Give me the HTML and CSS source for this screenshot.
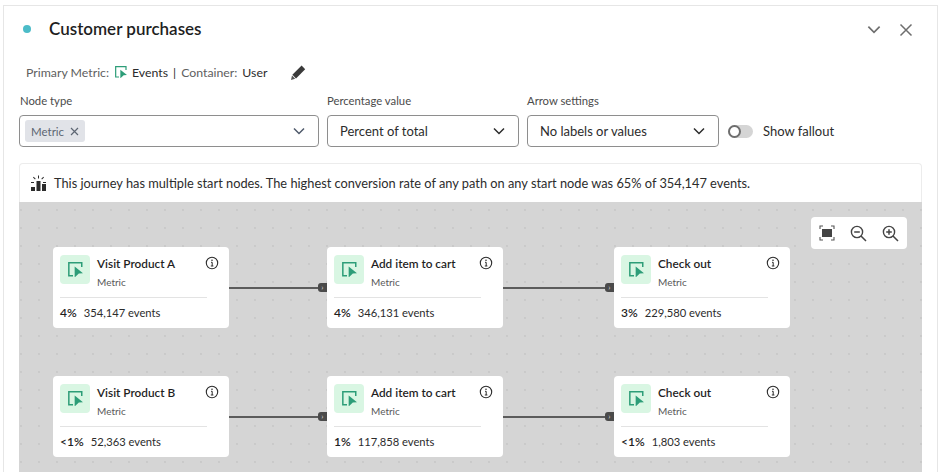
FILE: index.html
```html
<!DOCTYPE html>
<html lang="en">
<head>
  <meta charset="UTF-8" />
  <title>Customer purchases</title>
  <link rel="stylesheet" href="styles.css">
</head>
<body>
  <svg class="defs" width="0" height="0">
    <symbol id="metric" viewBox="0 0 18 18">
      <path d="M6 16.5H1V1H16.5V6" fill="none" stroke="currentColor" stroke-width="1.8"/>
      <path d="M8 5.5L18 13.5L13 13.8L8 18.5Z" fill="currentColor"/>
    </symbol>
    <symbol id="info" viewBox="0 0 14 14">
      <circle cx="7" cy="7" r="5.7" fill="none" stroke="currentColor" stroke-width="1.1"/>
      <circle cx="7" cy="4.2" r="0.8" fill="currentColor"/>
      <path d="M6 6.3H7.2V10M5.8 10H8.4" fill="none" stroke="currentColor" stroke-width="1"/>
    </symbol>
    <symbol id="chev" viewBox="0 0 12 8">
      <path d="M1 1.5L6 6.5L11 1.5" fill="none" stroke="currentColor" stroke-width="1.5"/>
    </symbol>
  </svg>

  <main class="panel">
    <header class="title-row">
      <span class="dot"></span>
      <h2>Customer purchases</h2>
      <svg class="head-chev" width="14" height="9"><use href="#chev"/></svg>
      <svg class="head-close" width="14" height="14" viewBox="0 0 14 14"><path d="M1.5 1.5L12.5 12.5M12.5 1.5L1.5 12.5" stroke="currentColor" stroke-width="1.5"/></svg>
    </header>

    <div class="meta-row">
      <span class="muted">Primary Metric:</span>
      <svg class="meta-icon" width="12" height="12"><use href="#metric"/></svg>
      <span>Events</span>
      <span class="sep">|</span>
      <span class="muted">Container:</span>
      <span>User</span>
      <svg class="pencil" width="17" height="17" viewBox="0 0 17 17"><path d="M11.6 1.6L15.2 5.2L6 14.4L2.4 10.8Z" fill="#3a3a3a"/><path d="M2 11.6L5.2 14.8L1 16Z" fill="#555"/></svg>
    </div>

    <section class="controls">
      <div class="field field-wide">
        <label>Node type</label>
        <div class="select">
          <span class="tag">Metric <svg width="9" height="9" viewBox="0 0 9 9"><path d="M1 1L8 8M8 1L1 8" stroke="currentColor" stroke-width="1.2"/></svg></span>
          <svg class="select-chev light" width="12" height="8"><use href="#chev"/></svg>
        </div>
      </div>
      <div class="field">
        <label>Percentage value</label>
        <div class="select"><span class="value">Percent of total</span><svg class="select-chev" width="12" height="8"><use href="#chev"/></svg></div>
      </div>
      <div class="field">
        <label>Arrow settings</label>
        <div class="select"><span class="value">No labels or values</span><svg class="select-chev" width="12" height="8"><use href="#chev"/></svg></div>
      </div>
      <div class="switch-wrap">
        <span class="switch"><span class="knob"></span></span>
        <span>Show fallout</span>
      </div>
    </section>

    <section class="journey">
      <p class="insight">
        <svg width="17" height="17" viewBox="0 0 17 17" fill="#2c2c2c"><rect x="1" y="12" width="4" height="4"/><rect x="6.5" y="6" width="4" height="10"/><rect x="12" y="9" width="4" height="7"/><path d="M8 0.5h1v3H8zM3 2.5l.7-.7 2 2-.7.7zM14 2.5l-.7-.7-2 2 .7.7zM1 7h3v1H1zM13 7h3v1h-3z"/></svg>
        This journey has multiple start nodes. The highest conversion rate of any path on any start node was 65% of 354,147 events.
      </p>

      <div class="canvas">
        <div class="zoom-tools">
          <svg width="16" height="16" viewBox="0 0 16 16"><path d="M1 4V1H4M12 1H15V4M15 12V15H12M4 15H1V12" fill="none" stroke="#555" stroke-width="1.1"/><rect x="3" y="4" width="10" height="8" fill="#444"/></svg>
          <svg width="17" height="17" viewBox="0 0 17 17"><circle cx="7" cy="7" r="5.6" fill="none" stroke="#444" stroke-width="1.4"/><path d="M4.2 7H9.8M11 11L16 16" stroke="#444" stroke-width="1.5"/></svg>
          <svg width="17" height="17" viewBox="0 0 17 17"><circle cx="7" cy="7" r="5.6" fill="none" stroke="#444" stroke-width="1.4"/><path d="M4.2 7H9.8M7 4.2V9.8M11 11L16 16" stroke="#444" stroke-width="1.5"/></svg>
        </div>

        <div class="path-row">
          <article class="node">
            <div class="node-head">
              <span class="node-icon"><svg width="15" height="15"><use href="#metric"/></svg></span>
              <div class="node-name"><strong>Visit Product A</strong><small>Metric</small></div>
              <svg class="info" width="14" height="14"><use href="#info"/></svg>
            </div>
            <div class="node-stat"><b>4%</b><span>354,147 events</span></div>
          </article>
          <div class="link link-a"><span class="arrow">›</span></div>
          <article class="node">
            <div class="node-head">
              <span class="node-icon"><svg width="15" height="15"><use href="#metric"/></svg></span>
              <div class="node-name"><strong>Add item to cart</strong><small>Metric</small></div>
              <svg class="info" width="14" height="14"><use href="#info"/></svg>
            </div>
            <div class="node-stat"><b>4%</b><span>346,131 events</span></div>
          </article>
          <div class="link link-b"><span class="arrow">›</span></div>
          <article class="node">
            <div class="node-head">
              <span class="node-icon"><svg width="15" height="15"><use href="#metric"/></svg></span>
              <div class="node-name"><strong>Check out</strong><small>Metric</small></div>
              <svg class="info" width="14" height="14"><use href="#info"/></svg>
            </div>
            <div class="node-stat"><b>3%</b><span>229,580 events</span></div>
          </article>
        </div>

        <div class="path-row">
          <article class="node">
            <div class="node-head">
              <span class="node-icon"><svg width="15" height="15"><use href="#metric"/></svg></span>
              <div class="node-name"><strong>Visit Product B</strong><small>Metric</small></div>
              <svg class="info" width="14" height="14"><use href="#info"/></svg>
            </div>
            <div class="node-stat"><b>&lt;1%</b><span>52,363 events</span></div>
          </article>
          <div class="link link-a"><span class="arrow">›</span></div>
          <article class="node">
            <div class="node-head">
              <span class="node-icon"><svg width="15" height="15"><use href="#metric"/></svg></span>
              <div class="node-name"><strong>Add item to cart</strong><small>Metric</small></div>
              <svg class="info" width="14" height="14"><use href="#info"/></svg>
            </div>
            <div class="node-stat"><b>1%</b><span>117,858 events</span></div>
          </article>
          <div class="link link-b"><span class="arrow">›</span></div>
          <article class="node">
            <div class="node-head">
              <span class="node-icon"><svg width="15" height="15"><use href="#metric"/></svg></span>
              <div class="node-name"><strong>Check out</strong><small>Metric</small></div>
              <svg class="info" width="14" height="14"><use href="#info"/></svg>
            </div>
            <div class="node-stat"><b>&lt;1%</b><span>1,803 events</span></div>
          </article>
        </div>
      </div>
    </section>
  </main>
</body>
</html>
```

FILE: styles.css
```css
html, body {
  height: 472px;
  overflow: hidden;
}
body {
  margin: 0;
  padding: 5px 4px 0 3px;
  background-color: white;
  font-family: "Lato", "Open Sans", sans-serif;
  font-size: 13px;
  color: #2c2c2c;
}
.defs {
  position: absolute;
}
.panel {
  height: 467px;
  box-sizing: border-box;
  border: 1px solid #e6e6e6;
  border-bottom: none;
  padding: 0 15px;
  overflow: hidden;
}
.title-row {
  height: 46px;
  display: flex;
  align-items: center;
  color: #6e6e6e;
}
.dot {
  width: 8px;
  height: 8px;
  margin-left: 4px;
  border-radius: 50%;
  background-color: #4cbcc8;
}
.title-row h2 {
  margin: 0 0 2px 18px;
  font-size: 17px;
  font-weight: 600;
  color: #1f1f1f;
  flex: 1;
}
.head-chev {
  margin-right: 18px;
}
.head-close {
  margin: 1px 9px 0 0;
}
.meta-row {
  height: 20px;
  margin-top: 10px;
  padding-left: 7px;
  display: flex;
  align-items: center;
  font-size: 12.3px;
  color: #2c2c2c;
}
.muted {
  color: #606060;
}
.meta-icon {
  margin: 0 5px 0 6px;
  color: #2d9d78;
}
.sep {
  margin: 0 5px;
}
.meta-row .muted + span {
  margin-left: 5px;
}
.pencil {
  margin-left: 23px;
}
.controls {
  margin-top: 11px;
  display: flex;
  gap: 8px;
  align-items: flex-end;
}
.field {
  width: 192px;
}
.field-wide {
  width: 300px;
}
.field label {
  display: block;
  margin-bottom: 7px;
  font-size: 11.3px;
  line-height: 15px;
  color: #4b4b4b;
}
.field-wide label {
  padding-left: 1px;
}
.select {
  height: 32px;
  box-sizing: border-box;
  padding: 0 13px 0 5px;
  border: 1px solid #8e8e8e;
  border-radius: 4px;
  display: flex;
  align-items: center;
  justify-content: space-between;
  background: white;
}
.value {
  margin-left: 7px;
  font-size: 13px;
}
.tag {
  height: 22px;
  padding: 0 6px;
  display: flex;
  align-items: center;
  gap: 6px;
  border-radius: 3px;
  background-color: #e1e3e8;
  font-size: 11.5px;
  color: #5d6673;
}
.select-chev {
  color: #2c2c2c;
}
.select-chev.light {
  color: #4f5a6b;
}
.switch-wrap {
  height: 32px;
  margin-left: 1px;
  display: flex;
  align-items: center;
  gap: 10px;
}
.switch {
  width: 25px;
  height: 13px;
  border-radius: 7px;
  background-color: #d5d5d5;
  display: block;
}
.knob {
  width: 9px;
  height: 9px;
  display: block;
  border: 2px solid #6e6e6e;
  border-radius: 50%;
  background: white;
}
.journey {
  margin-top: 16px;
}
.insight {
  height: 39px;
  margin: 0;
  padding-left: 10px;
  box-sizing: border-box;
  border: 1px solid #ececec;
  border-bottom: none;
  border-radius: 4px 4px 0 0;
  display: flex;
  align-items: center;
  gap: 7px;
  font-size: 12.8px;
}
.canvas {
  position: relative;
  height: 270px;
  padding: 45px 0 0 34px;
  box-sizing: border-box;
  background-color: #d5d5d5;
  background-image: radial-gradient(#bdbdbd 0.6px, transparent 0.8px);
  background-size: 18px 18px;
  background-position: 11px -1px;
}
.zoom-tools {
  position: absolute;
  top: 15px;
  right: 15px;
  width: 96px;
  height: 32px;
  border-radius: 4px;
  background: white;
  display: flex;
  align-items: center;
  justify-content: space-around;
}
.path-row {
  display: flex;
  align-items: center;
  margin-bottom: 48px;
}
.node {
  width: 176px;
  height: 81px;
  box-sizing: border-box;
  padding: 8px 7px 0;
  border-radius: 4px;
  background: white;
}
.node-head {
  display: flex;
  height: 42px;
  border-bottom: 1px solid #e3e3e3;
  margin-right: 15px;
  position: relative;
}
.node-icon {
  width: 30px;
  height: 29px;
  border-radius: 4px;
  background-color: #d9f6e3;
  color: #2d9d78;
  display: flex;
  align-items: center;
  justify-content: center;
}
.node-name {
  margin-left: 7px;
  display: flex;
  flex-direction: column;
}
.node-name strong {
  font-size: 11.8px;
  font-weight: 600;
  line-height: 15px;
  margin-top: 1px;
  color: #1f1f1f;
}
.node-name small {
  font-size: 10px;
  line-height: 14px;
  margin-top: 4px;
  color: #5a5a5a;
}
.info {
  position: absolute;
  top: 1px;
  right: -12px;
  color: #2c2c2c;
}
.node-stat {
  margin-top: 7px;
  display: flex;
  gap: 7px;
  font-size: 11.2px;
  line-height: 16px;
}
.node-stat b {
  font-size: 12px;
  font-weight: 600;
  color: #1f1f1f;
}
.link {
  height: 2px;
  background-color: #5c5c5c;
  position: relative;
}
.link-a {
  width: 98px;
}
.link-b {
  width: 111px;
}
.arrow {
  position: absolute;
  right: 0;
  top: -4px;
  width: 9px;
  height: 9px;
  border-radius: 3px 0 0 3px;
  background-color: #4a4a4a;
  color: #ddd;
  font-size: 8px;
  line-height: 8px;
  text-align: center;
}
```
